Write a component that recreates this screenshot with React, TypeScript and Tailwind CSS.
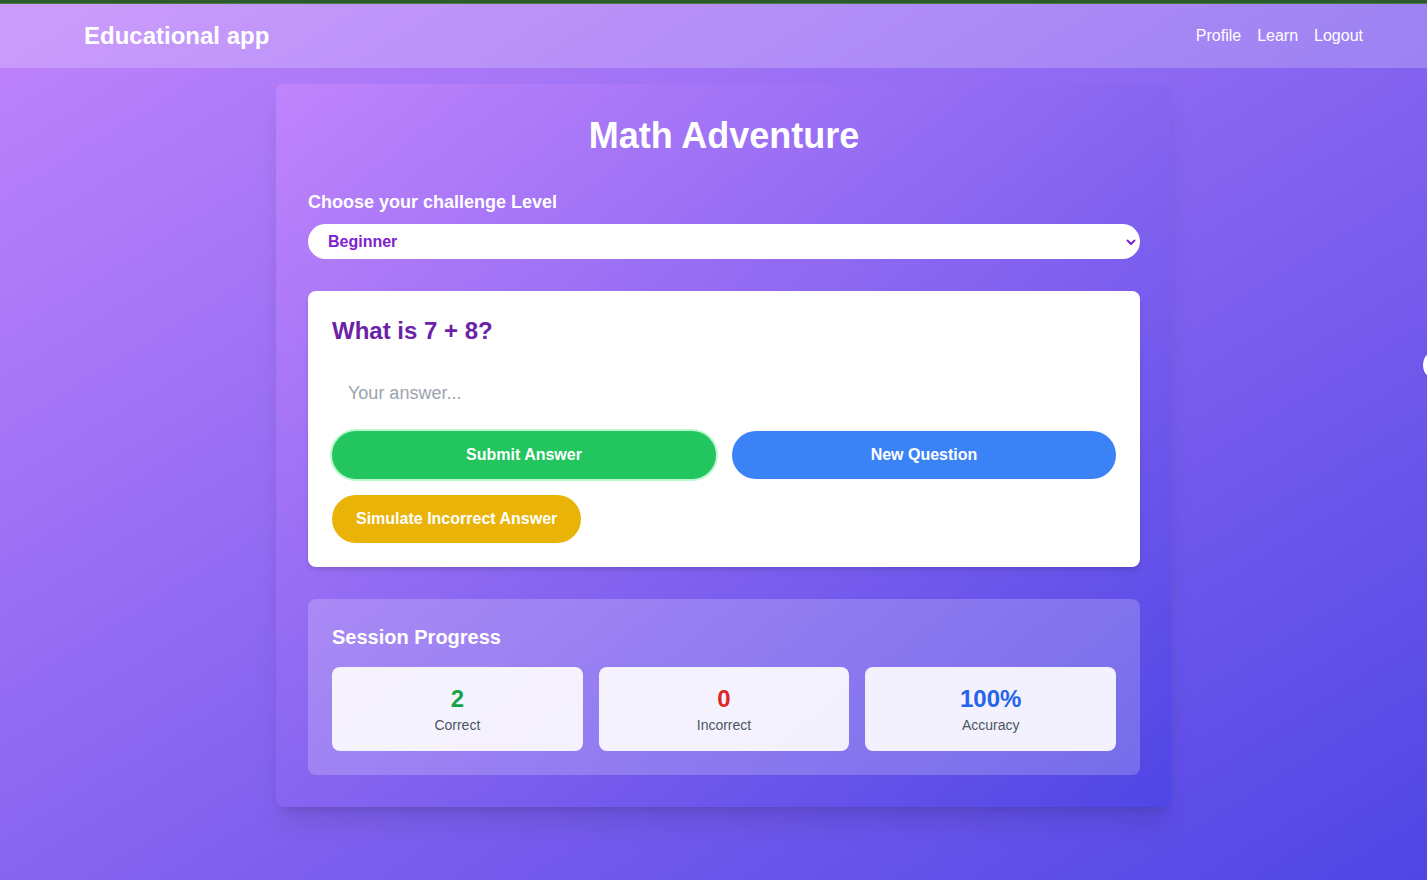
import React from "react";

export default function App() {
  return (
    <div
      className="relative min-h-screen overflow-hidden bg-[linear-gradient(to_bottom_right,#c084fc,#4f46e5)]"
      style={{ fontFamily: '"Liberation Sans", Arial, sans-serif' }}
    >
      <div className="h-[4px] bg-[#2b5a2b] border-b border-[#4a7a4a]" />
      <header className="h-16 bg-white/20 flex items-center justify-between pl-[84px] pr-[64px]">
        <h1 className="text-2xl font-bold text-white">Educational app</h1>
        <nav className="flex gap-4 text-white text-base">
          <a>Profile</a>
          <a>Learn</a>
          <a>Logout</a>
        </nav>
      </header>

      <main className="pt-4 pb-16">
        <div className="ml-[276px] w-[896px] rounded-lg bg-[linear-gradient(to_bottom_right,#c084fc,#4f46e5)] p-8 shadow-xl">
          <h2 className="text-4xl font-bold text-white text-center mb-8">Math Adventure</h2>

          <label className="block text-lg font-semibold text-white mb-2">Choose your challenge Level</label>
          <div className="relative mb-8">
            <select className="block h-[35px] w-full appearance-none rounded-full bg-white px-5 text-base font-bold text-[#7e22ce] outline-none">
              <option>Beginner</option>
              <option>Intermediate</option>
              <option>Advanced</option>
            </select>
            <svg
              className="pointer-events-none absolute right-[4px] top-1/2 -translate-y-1/2 text-[#7e22ce]"
              width="10"
              height="8"
              viewBox="0 0 10 8"
              fill="none"
            >
              <path d="M1.5 2.5 L5 6 L8.5 2.5" stroke="currentColor" strokeWidth="2" strokeLinecap="round" strokeLinejoin="round" />
            </svg>
          </div>

          <div className="rounded-lg bg-white p-6 shadow-md mb-8">
            <h3 className="text-2xl font-bold text-[#6b21a8] mb-5">What is 7 + 8?</h3>
            <input
              className="block w-full px-4 py-3 text-lg text-gray-800 placeholder:text-[#9ca3af] outline-none mb-3"
              placeholder="Your answer..."
            />
            <div className="grid grid-cols-2 gap-4">
              <button className="h-12 rounded-full bg-[#22c55e] text-white font-bold ring-2 ring-[#bbf7d0]">
                Submit Answer
              </button>
              <button className="h-12 rounded-full bg-[#3b82f6] text-white font-bold">New Question</button>
            </div>
            <div className="mt-4">
              <button className="h-12 rounded-full bg-[#eab308] px-6 text-white font-bold">
                Simulate Incorrect Answer
              </button>
            </div>
          </div>

          <div className="rounded-lg bg-white/20 p-6">
            <h3 className="text-xl font-semibold text-white mb-4">Session Progress</h3>
            <div className="grid grid-cols-3 gap-4">
              <div className="rounded-lg bg-white/90 p-4 text-center">
                <div className="text-2xl font-bold text-[#16a34a]">2</div>
                <div className="text-sm text-[#4b5563]">Correct</div>
              </div>
              <div className="rounded-lg bg-white/90 p-4 text-center">
                <div className="text-2xl font-bold text-[#dc2626]">0</div>
                <div className="text-sm text-[#4b5563]">Incorrect</div>
              </div>
              <div className="rounded-lg bg-white/90 p-4 text-center">
                <div className="text-2xl font-bold text-[#2563eb]">100%</div>
                <div className="text-sm text-[#4b5563]">Accuracy</div>
              </div>
            </div>
          </div>
        </div>
      </main>

      <div className="absolute left-[1423px] top-[349px] h-8 w-8 rounded-full bg-white shadow" />
    </div>
  );
}
